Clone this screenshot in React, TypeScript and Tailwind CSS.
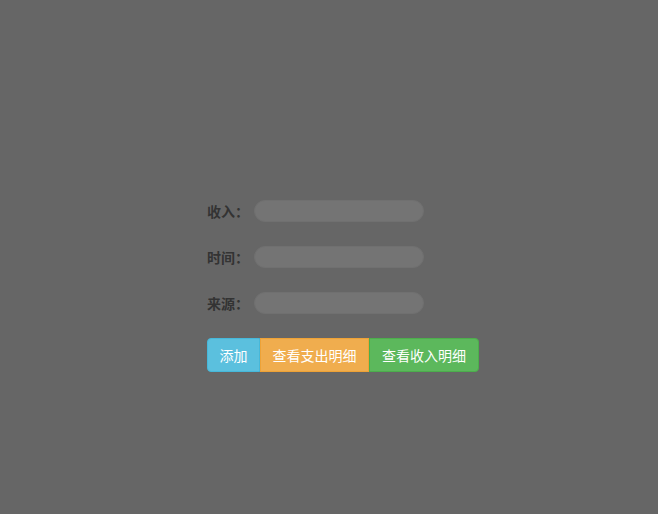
export default function App() {
  const rows = ['收入：', '时间：', '来源：']
  return (
    <div className="min-h-[514px] w-full bg-[#666666] pt-[200px] pl-[207px] font-['Noto_Sans_CJK_SC',sans-serif]">
      <div className="flex flex-col gap-[24px]">
        {rows.map((label) => (
          <div key={label} className="flex h-[22px] items-center">
            <span className="w-[47px] text-[14px] leading-[22px] font-bold text-[#333333]">{label}</span>
            <div className="h-[22px] w-[170px] rounded-full border border-[#707070] bg-[#747474]" />
          </div>
        ))}
        <div className="flex">
          <button className="h-[34px] w-[53px] rounded-l-[4px] border border-[#46b8da] bg-[#5bc0de] text-[14px] leading-[20px] text-white">
            添加
          </button>
          <button className="h-[34px] w-[109px] border border-[#eea236] bg-[#f0ad4e] text-[14px] leading-[20px] text-white">
            查看支出明细
          </button>
          <button className="h-[34px] w-[110px] rounded-r-[4px] border border-[#4cae4c] bg-[#5cb85c] text-[14px] leading-[20px] text-white">
            查看收入明细
          </button>
        </div>
      </div>
    </div>
  )
}
